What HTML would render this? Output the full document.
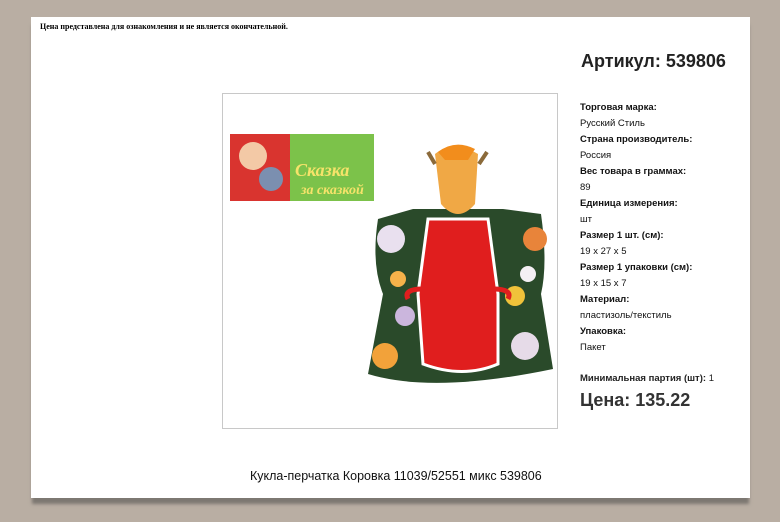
<!DOCTYPE html>
<html><head><meta charset="utf-8"><style>
body{margin:0;width:780px;height:522px;background:#b9aea3;position:relative;overflow:hidden;font-family:"Liberation Sans",sans-serif;}
.card{position:absolute;left:31px;top:17px;width:719px;height:481px;background:#fff;box-shadow:0 7px 3px -1px #7d7872;}
.note{position:absolute;left:40px;top:22px;font:bold 8px "Liberation Serif",serif;color:#000;}
.imgbox{position:absolute;left:222px;top:93px;width:334px;height:334px;border:1px solid #c8c8c8;background:#fff;overflow:hidden;}
.art{position:absolute;left:581px;top:51px;font-weight:bold;font-size:18px;color:#222;}
.spec{position:absolute;left:580px;top:100px;font-size:9.5px;color:#111;line-height:16px;}
.min{position:absolute;left:580px;top:373px;font-size:9.5px;font-weight:bold;color:#222;}
.min span{font-weight:normal}
.price{position:absolute;left:580px;top:390px;font-size:18px;font-weight:bold;color:#333;}
.title{position:absolute;left:250px;top:468px;font-size:13px;color:#111;transform:scaleX(0.96);transform-origin:left top;white-space:nowrap;}
</style></head><body>
<div class="card"></div>
<div class="note">Цена представлена для ознакомления и не является окончательной.</div>
<div class="imgbox">
<svg width="334" height="334" viewBox="0 0 334 334">
 <rect x="7" y="40" width="144" height="67" fill="#7cc24a"/>
 <rect x="7" y="40" width="60" height="67" fill="#d9342f"/>
 <circle cx="30" cy="62" r="14" fill="#f3c9a6"/>
 <circle cx="48" cy="85" r="12" fill="#7b8fb0"/>
 <text x="72" y="82" font-family="Liberation Serif" font-size="18" fill="#f6e36a" font-style="italic" font-weight="bold">Сказка</text>
 <text x="78" y="100" font-family="Liberation Serif" font-size="14" fill="#f6e36a" font-style="italic" font-weight="bold">за сказкой</text>
 <path d="M155 125 Q148 170 160 200 L145 280 Q210 300 330 275 L318 200 Q325 170 318 120 L280 115 L190 115 Z" fill="#2a4a2a"/>
 <circle cx="168" cy="145" r="14" fill="#e9e0ef"/><circle cx="162" cy="262" r="13" fill="#f2a23a"/>
 <circle cx="302" cy="252" r="14" fill="#e6dbe8"/><circle cx="312" cy="145" r="12" fill="#e8843a" />
 <circle cx="182" cy="222" r="10" fill="#cbb6dd"/><circle cx="292" cy="202" r="10" fill="#f0c23a"/>
 <circle cx="305" cy="180" r="8" fill="#f4f0f4"/><circle cx="175" cy="185" r="8" fill="#f5b24a"/>
 <path d="M205 125 L265 125 L275 200 L275 270 Q240 285 200 270 L195 200 Z" fill="#e01e1e" stroke="#fff" stroke-width="3"/>
 <path d="M200 195 Q180 195 185 205 M270 195 Q290 195 285 205" stroke="#e01e1e" stroke-width="5" fill="none"/>
 <path d="M212 60 Q230 45 255 60 L252 110 Q235 130 218 110 Z" fill="#f0a845"/>
 <path d="M205 58 L212 70 M264 58 L256 70" stroke="#8b6a3a" stroke-width="4"/>
 <path d="M215 58 Q232 45 252 55 L245 66 L222 66 Z" fill="#f28d1c"/>
</svg>
</div>
<div class="art">Артикул: 539806</div>
<div class="spec">
<b>Торговая марка:</b><br>Русский Стиль<br>
<b>Страна производитель:</b><br>Россия<br>
<b>Вес товара в граммах:</b><br>89<br>
<b>Единица измерения:</b><br>шт<br>
<b>Размер 1 шт. (см):</b><br>19 x 27 x 5<br>
<b>Размер 1 упаковки (см):</b><br>19 x 15 x 7<br>
<b>Материал:</b><br>пластизоль/текстиль<br>
<b>Упаковка:</b><br>Пакет
</div>
<div class="min">Минимальная партия (шт): <span>1</span></div>
<div class="price">Цена: 135.22</div>
<div class="title">Кукла-перчатка Коровка 11039/52551 микс 539806</div>
</body></html>
